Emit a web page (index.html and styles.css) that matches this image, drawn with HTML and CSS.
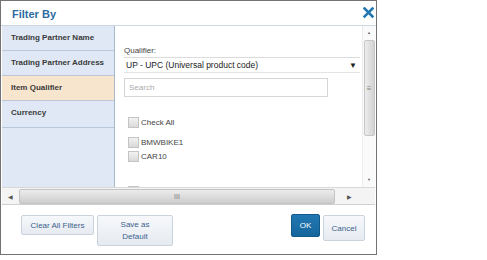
FILE: index.html
```html
<!DOCTYPE html>
<html lang="en">
<head>
    <meta charset="UTF-8">
    <title>Filter By</title>
    <link rel="stylesheet" href="styles.css">
</head>
<body>

    <div class="dialog">
        <div class="title-bar">
            <span class="title">Filter By</span>
            <svg class="close" width="11" height="11" viewBox="0 0 11 11">
                <path d="M1.5 1.5 L9.5 9.5 M9.5 1.5 L1.5 9.5" stroke="#2377b0" stroke-width="2.6" stroke-linecap="square"/>
            </svg>
        </div>

        <div class="main">
            <ul class="side">
                <li>Trading Partner Name</li>
                <li>Trading Partner Address</li>
                <li class="active">Item Qualifier</li>
                <li>Currency</li>
            </ul>

            <div class="content">
                <div class="label">Qualifier:</div>
                <div class="select">
                    <span>UP - UPC (Universal product code)</span>
                    <span class="caret">&#9660;</span>
                </div>
                <div class="search">Search</div>

                <div class="check check-all"><span class="box"></span>Check All</div>
                <div class="check first"><span class="box"></span>BMWBIKE1</div>
                <div class="check"><span class="box"></span>CAR10</div>
                <!-- next row only peeks in above the scrollbar -->
                <div class="check more"><span class="box"></span></div>
            </div>

            <div class="vbar">
                <span class="arrow up">&#9650;</span>
                <div class="vtrack">
                    <div class="vthumb"><span class="grip">&#8801;</span></div>
                </div>
                <span class="arrow down">&#9660;</span>
            </div>
        </div>

        <div class="hbar">
            <span class="harrow">&#9664;</span>
            <div class="hthumb">III</div>
            <span class="harrow right">&#9654;</span>
        </div>

        <div class="footer">
            <button class="btn clear">Clear All Filters</button>
            <button class="btn save">Save as<br>Default</button>
            <div class="spacer"></div>
            <button class="btn ok">OK</button>
            <button class="btn cancel">Cancel</button>
        </div>
    </div>

</body>
</html>
```

FILE: styles.css
```css
body {
    margin: 0;
    padding: 0;
    background-color: white;
    font-family: "Liberation Sans", Arial, sans-serif;
    font-size: 8px;
    color: #333;
}
.dialog {
    width: 375px;
    height: 253px;
    border: 1px solid #737373;
    display: flex;
    flex-direction: column;
    background-color: white;
}
.title-bar {
    height: 24px;
    border-bottom: 1px solid #cdd7e4;
    display: flex;
    align-items: center;
    justify-content: space-between;
    padding: 0 2px 0 11px;
}
.title {
    font-size: 11px;
    font-weight: bold;
    color: #2c6ca2;
    margin-top: 2px;
}
.close {
    margin-top: -1px;
}
.main {
    height: 161px;
    display: flex;
}
.side {
    list-style: none;
    margin: 0 0 0 1px;
    padding: 0;
    width: 112px;
    background-color: #dfe8f4;
    border-right: 1px solid #a9bacd;
}
.side li {
    height: 24px;
    line-height: 24px;
    padding-left: 9px;
    font-weight: bold;
    color: #3a3a3a;
    border-bottom: 1px solid #b8c7d9;
}
.side li.active {
    background-color: #f8e5cd;
}
.side li:last-child {
    height: 26px;
    line-height: 24px;
}
.content {
    flex: 1;
    padding: 19px 0 0 9px;
    overflow: hidden;
}
.label {
    height: 11px;
    line-height: 11px;
    color: #444;
}
.select {
    margin-top: 1px;
    width: 234px;
    height: 14px;
    border-top: 1px solid #dcdcdc;
    border-bottom: 1px solid #e3e3e3;
    display: flex;
    justify-content: space-between;
    align-items: center;
    padding-left: 2px;
    font-size: 8.5px;
    color: #222;
}
.caret {
    font-size: 8px;
    color: #222;
    margin-right: 3px;
}
.search {
    margin-top: 5px;
    width: 198px;
    height: 17px;
    line-height: 17px;
    border: 1px solid #d6d6d6;
    padding-left: 4px;
    color: #aaa;
}
.check {
    display: flex;
    align-items: center;
    height: 12px;
    color: #444;
}
.check-all {
    margin-top: 19px;
}
.check + .check {
    margin-top: 2px;
}
.check.first {
    margin-top: 8px;
}
.check.more {
    margin-top: 23px;
}
.box {
    width: 9px;
    height: 9px;
    margin: 0 2px 0 4px;
    border: 1px solid #c4c4c4;
    background: linear-gradient(#f2f2f2, #d9d9d9);
}
.vbar {
    width: 12px;
    margin-right: 1px;
    display: flex;
    flex-direction: column;
    align-items: center;
    background-color: #fafafa;
    border-left: 1px solid #ececec;
}
.arrow {
    font-size: 4px;
    color: #666;
    height: 14px;
    line-height: 14px;
}
.vtrack {
    flex: 1;
    width: 11px;
}
.vthumb {
    height: 94px;
    border: 1px solid #c6c6c6;
    border-radius: 2px;
    background: linear-gradient(to right, #ececec, #d3d3d3);
    display: flex;
    align-items: center;
    justify-content: center;
}
.grip {
    font-size: 8px;
    color: #888;
}
.hbar {
    height: 16px;
    margin: 0 1px;
    display: flex;
    align-items: center;
    background-color: #f4f4f4;
    border-top: 1px solid #d8d8d8;
    border-bottom: 1px solid #cfcfcf;
}
.harrow {
    width: 17px;
    font-size: 6px;
    color: #555;
    text-align: center;
}
.harrow.right {
    width: 28px;
    padding-right: 12px;
}
.hthumb {
    flex: 1;
    height: 13px;
    line-height: 13px;
    text-align: center;
    font-size: 7px;
    color: #777;
    border: 1px solid #c4c4c4;
    border-radius: 2px;
    background: linear-gradient(#ececec, #cdcdcd);
}
.footer {
    flex: 1;
    display: flex;
    align-items: flex-start;
    padding: 10px 11px 0 20px;
}
.btn {
    font-family: "Liberation Sans", Arial, sans-serif;
    font-size: 8px;
    color: #3c5f8c;
    border: 1px solid #cad2dc;
    border-radius: 2px;
    background: linear-gradient(#f6f8fb, #e6ebf1);
    padding: 0;
    margin: 0;
}
.clear {
    width: 73px;
    height: 20px;
}
.save {
    width: 76px;
    height: 31px;
    margin-left: 3px;
    line-height: 12px;
}
.spacer {
    flex: 1;
}
.ok {
    width: 29px;
    height: 23px;
    color: white;
    background: linear-gradient(#2277b2, #15669c);
    border-color: #105a8c;
    margin-top: -1px;
}
.cancel {
    width: 42px;
    height: 26px;
    margin-left: 3px;
}
```
